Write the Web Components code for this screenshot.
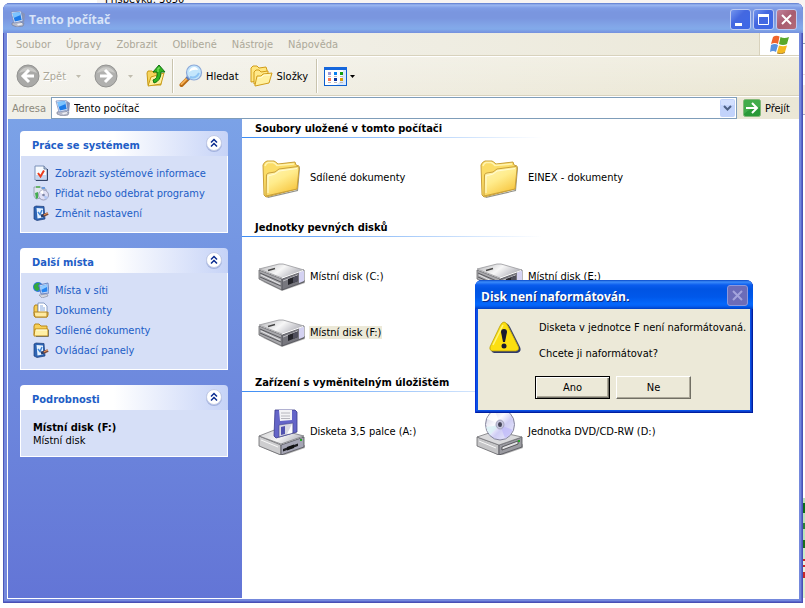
<!DOCTYPE html>
<html lang="cs">
<head>
<meta charset="utf-8">
<title>Tento počítač</title>
<style>
html, body { height: 100%; }
body {
  margin: 0;
  font: 11px/13px "DejaVu Sans Condensed", "DejaVu Sans", sans-serif;
  color: #000;
  background: #fff;
}
</style>
</head>
<body>
<xp-desktop>
  <span slot="behind">Příspěvků: 3650</span>
  <xp-window heading="Tento počítač">
    <xp-menubar>
      <button>Soubor</button><button>Úpravy</button><button>Zobrazit</button><button>Oblíbené</button><button>Nástroje</button><button>Nápověda</button>
    </xp-menubar>
    <xp-toolbar></xp-toolbar>
    <xp-address value="Tento počítač"></xp-address>
    <xp-explorer>
      <xp-taskbox slot="side" heading="Práce se systémem">
        <xp-link icon="info">Zobrazit systémové informace</xp-link>
        <xp-link icon="programs">Přidat nebo odebrat programy</xp-link>
        <xp-link icon="settings">Změnit nastavení</xp-link>
      </xp-taskbox>
      <xp-taskbox slot="side" heading="Další místa">
        <xp-link icon="network">Místa v síti</xp-link>
        <xp-link icon="documents">Dokumenty</xp-link>
        <xp-link icon="smallfolder">Sdílené dokumenty</xp-link>
        <xp-link icon="settings">Ovládací panely</xp-link>
      </xp-taskbox>
      <xp-taskbox slot="side" heading="Podrobnosti">
        <xp-details heading="Místní disk (F:)">Místní disk</xp-details>
      </xp-taskbox>
      <xp-group heading="Soubory uložené v tomto počítači">
        <xp-item icon="folder">Sdílené dokumenty</xp-item>
        <xp-item icon="folder">EINEX - dokumenty</xp-item>
      </xp-group>
      <xp-group heading="Jednotky pevných disků">
        <xp-item icon="disk">Místní disk (C:)</xp-item>
        <xp-item icon="disk">Místní disk (E:)</xp-item>
        <xp-item icon="disk" selected>Místní disk (F:)</xp-item>
      </xp-group>
      <xp-group heading="Zařízení s vyměnitelným úložištěm">
        <xp-item icon="floppy">Disketa 3,5 palce (A:)</xp-item>
        <xp-item icon="cd">Jednotka DVD/CD-RW (D:)</xp-item>
      </xp-group>
    </xp-explorer>
  </xp-window>
  <xp-dialog slot="over" heading="Disk není naformátován.">
    <p>Disketa v jednotce F není naformátovaná.</p>
    <p>Chcete ji naformátovat?</p>
  </xp-dialog>
</xp-desktop>

<script>
/* name: [width, height, markup] */
const ICONS = {
  computer: [16, 16, `
    <path d="M2 12 L9 10.500 L14 12.500 L13 15 L7 16 L2 14Z" fill="#b9bccb" stroke="#6d7590" stroke-width=".6"/>
    <path d="M7 13 L12 12 L12 13.500 L8 14.500Z" fill="#eef0f6"/>
    <path d="M12 1 L15 3 L14 12 L11 10Z" fill="#8793b8"/>
    <path d="M1 1 L11 0 L13 10 L4 12Z" fill="#dfe8f8" stroke="#7488b8" stroke-width=".7"/>
    <path d="M2.500 2 L10 1.200 L11.700 9 L4.800 10.500Z" fill="#1d7be8"/>
    <path d="M2.500 2 L10 1.200 L10.600 4 L3.500 7Z" fill="#7cc4ff"/>`],
  back: [24, 24, `
    <circle cx="12" cy="12" r="11" fill="#a9a9a7" stroke="#929290"/>
    <path d="M3 9 A10 10 0 0 1 21 9 Q12 5 3 9" fill="#c9c9c6"/>
    <path d="M13 6 L7 12 L13 18 M8 12 H18" fill="none" stroke="#fff" stroke-width="3"/>`],
  forward: [24, 24, `
    <circle cx="12" cy="12" r="11" fill="#b1b1af" stroke="#929290"/>
    <path d="M3 9 A10 10 0 0 1 21 9 Q12 5 3 9" fill="#cbcbc8"/>
    <path d="M11 6 L17 12 L11 18 M16 12 H6" fill="none" stroke="#fff" stroke-width="3"/>`],
  up: [20, 24, `
    <path d="M1 9 L2 7 L6 7 L8 9 L13 8 L15 21 L2 21Z" fill="#f6d45c" stroke="#c89a14"/>
    <path d="M5 13 L18 9 L15 20 L2 22Z" fill="#fff0a0" stroke="#c89a14"/>
    <path d="M7 16 Q12 15 11 8 L7 8 L13 1 L19 8 L15 8 Q15 17 8 19Z" fill="#2fb51f" stroke="#147012"/>
    <path d="M12 8 L12 4 L14 4" fill="none" stroke="#8cea70"/>`],
  search: [24, 24, `
    <path d="M2.500 21 L9 14.500" stroke="#b86a14" stroke-width="4" stroke-linecap="round"/>
    <path d="M2.500 20 L8 14.500" stroke="#f6b054" stroke-width="2" stroke-linecap="round"/>
    <path d="M8 15 L10 13" stroke="#5878b8" stroke-width="4"/>
    <circle cx="15" cy="8.500" r="7.500" fill="#c4e6fc" stroke="#8ca8d8" stroke-width="1.200"/>
    <path d="M10 8 Q11 3 16 3 Q19 4 19 6 Q14 5 10 8" fill="#fff"/>
    <path d="M11 13 Q17 15 20 9" fill="none" stroke="#8ec4f4" stroke-width="2"/>`],
  folders: [24, 22, `
    <path d="M1 17 L1 3 L3 1 L7 1 L9 3 L16 2 L17 5 L17 15Z" fill="#ffe680" stroke="#d19c18"/>
    <path d="M4 19 L4 7 L6 5 L9 5 L11 7 L18 6 L18 16Z" fill="#ffe98a" stroke="#d19c18"/>
    <path d="M5 20 L7 11 L11 11 L13 9 L22 8 L19 18 L5 21Z" fill="#fff0a0" stroke="#d19c18"/>
    <path d="M8 13 L12 12 L14 10 L20 10" fill="none" stroke="#fffbd6"/>`],
  views: [23, 19, `
    <rect x=".5" y=".5" width="22" height="18" fill="#fff" stroke="#0b5fd0"/>
    <path d="M19 3H22V18H12Q19 14 19 3" fill="#d8e8fc"/>
    <path d="M0 0H23V3H0Z" fill="#1567dc"/>
    <path d="M4 5h3v3h-3z" fill="#9c98d8"/><path d="M10 5h3v3h-3z" fill="#0a82f0"/><path d="M16 5h3v3h-3z" fill="#109c10"/>
    <path d="M4 11h3v3h-3z" fill="#fc7450"/><path d="M10 11h3v3h-3z" fill="#0a349c"/><path d="M16 11h3v3h-3z" fill="#d89c08"/>
    <path d="M4 9.500h3M10 9.500h3M16 9.500h3M4 15.500h3M10 15.500h3M16 15.500h3" stroke="#b8b8c0"/>`],
  caret: [5, 3, `<path d="M0 0H5L2.500 3Z" fill="currentColor"/>`],
  go: [18, 18, `
    <rect x=".5" y=".5" width="17" height="17" rx="2" fill="#2a9a38" stroke="#82b878"/>
    <path d="M1 1H17V8Q8 8 1 15Z" fill="#4cb454" opacity=".7"/>
    <path d="M3 9H14M9 4L14 9L9 14" fill="none" stroke="#fff" stroke-width="2"/>`],
  down: [15, 18, `
    <rect width="15" height="18" rx="2" fill="#c2d3fb"/>
    <path d="M1 1H14V6H1Z" fill="#d3e0fe"/>
    <path d="M4 7L7.500 10.500L11 7" fill="none" stroke="#4d6185" stroke-width="2"/>`],
  flag: [20, 19, `
    <path d="M3 2 Q6 0 9.500 1.500 L8 9 Q5 7 1 9Z" fill="#f0642c"/>
    <path d="M10.500 2 Q14 4 19 2 L17 9 Q13 11 9 9Z" fill="#58a82c"/>
    <path d="M1 10 Q5 8 8 10 L6 17 Q3 15 0 17Z" fill="#5a92e0"/>
    <path d="M9 10.500 Q13 12 17 10.500 L15 17 Q11 20 7 17.500Z" fill="#f4b820"/>
    <path d="M7 18 Q11 20 15 17.500" fill="none" stroke="#a88030"/>`],
  chevrons: [18, 18, `
    <circle cx="9" cy="10" r="8" fill="#7d8fc8" opacity=".55"/>
    <circle cx="9" cy="9" r="7.500" fill="#fff" stroke="#c2cbe6"/>
    <path d="M6 8.500L9 5.500L12 8.500M6 12.500L9 9.500L12 12.500" fill="none" stroke="#0a2c90" stroke-width="1.500"/>`],
  info: [16, 16, `
    <path d="M2 1H11L14 4V15H2Z" fill="#f6faff" stroke="#7a90b8"/>
    <path d="M11 1V4H14" fill="#b8c8e4" stroke="#56698c" stroke-width=".8"/>
    <path d="M14.500 4V15.500H3" fill="none" stroke="#33456a"/>
    <path d="M3 10H13V14H3Z" fill="#c4d6f2"/>
    <path d="M5 8L7.500 11.500L11 5.500" fill="none" stroke="#ea3c1c" stroke-width="2"/>`],
  programs: [16, 16, `
    <path d="M1 2H8L9 4H13V12L3 14L1 11Z" fill="#dfe5ee" stroke="#8c98ac" stroke-width=".8"/>
    <path d="M3 1H7V3H3Z" fill="#6ab46c"/><path d="M9 2H12V4H9Z" fill="#6c9de0"/>
    <path d="M2 8L5 7V13L3 14Z" fill="#43ac50"/>
    <circle cx="10.500" cy="10" r="5" fill="#dfdff4" stroke="#8b8ea8" stroke-width=".8"/>
    <path d="M10.500 10L7 7A5 5 0 0 1 10 5Z" fill="#fff"/><path d="M10.500 10L15 12A5 5 0 0 1 12 14.500Z" fill="#b4c8f4"/>
    <circle cx="10.500" cy="10" r="1.300" fill="#7d84a4"/>`],
  settings: [16, 16, `
    <path d="M1 2L3 1L11 1.500L12 14L4 15.500L1 14Z" fill="#2d64b4" stroke="#1c3c78" stroke-width=".7"/>
    <path d="M3.500 3L10 3.500V12.500L4.500 13.500Z" fill="#e6f2ff"/>
    <path d="M5 7L7 9.500L9 5" fill="none" stroke="#3f86d8" stroke-width="1.500"/>
    <path d="M8 11L10.500 10.500" fill="none" stroke="#263c6c" stroke-width="3"/>
    <path d="M10.500 10.500L15 8.500" stroke="#7a4a38" stroke-width="3"/>
    <path d="M11 9.800L15 8" stroke="#f09c60"/>`],
  network: [16, 16, `
    <circle cx="5" cy="5" r="5" fill="#2f78d8"/>
    <path d="M1 3Q4 0 7 1L5 4L7 7L4 9Q0 7 1 3" fill="#34a83c"/>
    <path d="M6 13L14 12L15 14L9 16Z" fill="#d4d6de" stroke="#8288a0" stroke-width=".6"/>
    <path d="M6 3L15 1L16 11L8 12Z" fill="#c6d8f8" stroke="#5874b4" stroke-width=".8"/>
    <path d="M7.500 4.300L14 2.600L14.500 9.600L9 10.600Z" fill="#2584f0"/>
    <path d="M7.500 4.300L14 2.600L14 5L8 8Z" fill="#90caff"/>`],
  documents: [16, 16, `
    <path d="M1 14V5L2 3H5V12L15 10V13L14 15H2Z" fill="#f7cd54" stroke="#b4841c"/>
    <path d="M5 1H11L14 4V12H5Z" fill="#fff" stroke="#7088b8" stroke-width=".8"/>
    <path d="M7 4H10M7 6H12M7 8H12" stroke="#86a8de"/>
    <path d="M1 10H14V15H2Z" fill="#ffeaa0" stroke="#b4841c"/>`],
  smallfolder: [16, 16, `
    <path d="M1 13V4L2 2H6L8 4H14V13Z" fill="#f8d058" stroke="#ba8818"/>
    <path d="M1 14L2 7H15V14Z" fill="#fff0a4" stroke="#ba8818"/>
    <path d="M3 14.500H15.500V8" fill="none" stroke="#6c6850" stroke-width=".8"/>
    <path d="M3 8H14" stroke="#fffce0"/>`],
  folder: [48, 48, `
    <defs><linearGradient id="f" x1="0" y1="0" x2=".6" y2="1"><stop offset="0" stop-color="#fff6b8"/><stop offset=".5" stop-color="#ffec8c"/><stop offset="1" stop-color="#f7c640"/></linearGradient></defs>
    <path d="M10 45L40 38L42 15L41 13L39 37L9 44Z" fill="#4c4c40" opacity=".6"/>
    <path d="M5 12Q6 9 9 8L16 8Q18 9 20 11L37 9L38 12L41 13L39 36L8 44L6 42Z" fill="#fbdc66" stroke="#c9a03a"/>
    <path d="M7 13Q8 10 10 9.500L15 9.500Q17 10 19 12.500L36 11" fill="none" stroke="#fff4b0" stroke-width="1.500"/>
    <path d="M8 43L8.500 22Q9 20 11 20L17 19L21 16L40 13.500Q41 14 41 16L39 36Z" fill="url(#f)" stroke="#c9a03a"/>
    <path d="M10 40L10 23L17 21L21 18L39 15.500" fill="none" stroke="#fffbd4"/>`],
  disk: [48, 48, `
    <defs><linearGradient id="d" x1="0" y1="0" x2="1" y2=".4"><stop offset="0" stop-color="#b4b4b8"/><stop offset=".55" stop-color="#f7f7f7"/><stop offset="1" stop-color="#b4b4bc"/></linearGradient></defs>
    <path d="M3 29L24 39L47 31V28L24 35Z" fill="#777" opacity=".55"/>
    <path d="M1 18L24 27V38L1 27Z" fill="#a8a8ac" stroke="#67676b" stroke-width=".8"/>
    <path d="M2 21L23 30M2 25L23 34" stroke="#59595d"/>
    <path d="M3 23L22 32" stroke="#e8e8ea"/>
    <path d="M24 27L46 18V30L24 38Z" fill="#77777e" stroke="#4e4e55" stroke-width=".8"/>
    <path d="M41 20L46 18V29L41 31Z" fill="#d4d2f2"/>
    <path d="M25 29L40 23" stroke="#c4c4c8"/>
    <path d="M30 27L40 23.500V29L30 33Z" fill="#25252b"/>
    <path d="M35 25.500L40 23.500V29L35 31Z" fill="#4f4f5c"/>
    <path d="M1 17L21 12H25L46 18L24 26Z" fill="url(#d)" stroke="#98989c" stroke-width=".8"/>
    <path d="M10 18.500L17 16.500" stroke="#444" stroke-width="1.500"/>
    <path d="M24 26L45 18.500" stroke="#fff"/>`],
  floppy: [48, 48, `
    <defs><linearGradient id="d" x1="0" y1="0" x2="1" y2=".4"><stop offset="0" stop-color="#d0d0d2"/><stop offset=".6" stop-color="#f4f4f4"/><stop offset="1" stop-color="#bcbcc4"/></linearGradient></defs>
    <path d="M3 40L24 49L47 41V38L24 45Z" fill="#777" opacity=".55"/>
    <path d="M1 29L23 38V48L1 39Z" fill="#cdcdcf" stroke="#67676b" stroke-width=".8"/>
    <path d="M3 33L20 40" stroke="#f8f8f8"/>
    <path d="M23 38L46 30V40L23 48Z" fill="#a5a5b4" stroke="#4e4e55" stroke-width=".8"/>
    <path d="M1 29L19 22L46 29L23 37Z" fill="url(#d)" stroke="#77777b" stroke-width=".8"/>
    <path d="M25 42L40 36.500V39L25 44.500Z" fill="#1b1b1f"/>
    <path d="M29 40L36 37.500V41L29 43.500Z" fill="#111"/>
    <path d="M43 32V34" stroke="#24a824" stroke-width="2"/>
    <path d="M17 3H37L39 5V25L18 31L16 29Z" fill="#6465c8" stroke="#3a3a8c" stroke-width=".8"/>
    <path d="M21 3H34V13L22 14Z" fill="#f3f3f6"/>
    <path d="M23 6H32M23 9H32M23 11.500H32" stroke="#a6a6b0" stroke-width=".8"/>
    <path d="M21 18L35 16V26L21 30Z" fill="#dadae4" stroke="#44448c" stroke-width=".6"/>
    <path d="M23 20L27 19V27L23 28Z" fill="#5051b0"/>
    <path d="M29 27L34 17V26Z" fill="#fff"/>`],
  cd: [48, 48, `
    <defs><linearGradient id="c" x1="0" y1="0" x2="1" y2="1"><stop offset="0" stop-color="#c8c8dc"/><stop offset=".4" stop-color="#fafaff"/><stop offset=".6" stop-color="#cfcdf4"/><stop offset="1" stop-color="#f0f0ff"/></linearGradient></defs>
    <path d="M3 39L24 49L47 41V37L24 45Z" fill="#777" opacity=".55"/>
    <path d="M1 30L23 38V48L1 39Z" fill="#c5c5c7" stroke="#67676b" stroke-width=".8"/>
    <path d="M3 34L20 41" stroke="#f8f8f8"/>
    <path d="M23 38L46 30V40L23 48Z" fill="#9a9aa0" stroke="#4e4e55" stroke-width=".8"/>
    <path d="M1 30L19 24L46 30L23 38Z" fill="#dadadc" stroke="#77777b" stroke-width=".8"/>
    <path d="M26 40L42 34V37L26 43Z" fill="#e4e4e6" stroke="#303034" stroke-width=".7"/>
    <path d="M43 33V35" stroke="#24a824" stroke-width="2"/>
    <ellipse cx="24" cy="17.500" rx="14.500" ry="15.500" fill="url(#c)" stroke="#85859c"/>
    <path d="M24 17L11 12Q14 5 19 4Z" fill="#fff" opacity=".8"/>
    <path d="M24 18L37 23Q33 30 29 31Z" fill="#bdb8fa" opacity=".7"/>
    <path d="M24 18L14 28Q11 24 10 20Z" fill="#d8f0f4" opacity=".8"/>
    <ellipse cx="24" cy="17.500" rx="4" ry="4.500" fill="#c6c6de" stroke="#9090a8" stroke-width=".7"/>
    <ellipse cx="24" cy="17.500" rx="2" ry="2.500" fill="#444458"/>`],
  warning: [32, 32, `
    <path d="M16 2Q19 2 21 6L31 26Q33 31 28 32H5Q1 31 3 27L13 6Q14 3 16 2" fill="#2f3a6c"/>
    <path d="M15 1Q17 1 19 5L29 25Q31 29 27 30H3Q0 29 1 26L11 5Q13 1 15 1" fill="#fcdf10" stroke="#b8a010" stroke-width=".8"/>
    <path d="M14 4L4 24" stroke="#fff57c" stroke-width="1.500"/>
    <path d="M12 11Q12 8 15 8Q18 8 18 11L16 21H14Z" fill="#1a1a30"/>
    <circle cx="15" cy="25" r="2.500" fill="#1a1a30"/>`],
  min: [19, 19, `<path d="M4 13H11V16H4Z" fill="#fff"/>`],
  max: [19, 19, `<path d="M4.500 5.500H14.500V14.500H4.500Z" fill="none" stroke="#fff"/><path d="M4 4H15V7H4Z" fill="#fff"/>`],
  close: [19, 19, `<path d="M5 5L14 14M14 5L5 14" stroke="currentColor" stroke-width="2"/>`],
};

function define(name, render) {
  customElements.define(name, class extends HTMLElement {
    constructor() { super(); this.attachShadow({ mode: 'open' }); }
    connectedCallback() {
      const t = document.createElement('template');
      t.innerHTML = render(this);
      this.shadowRoot.replaceChildren(t.content.cloneNode(true));
    }
  });
}
const attr = (el, n) => el.getAttribute(n) || '';
const BUTTON = `button { font: inherit; color: inherit; background: none; border: 0; padding: 0; margin: 0; }`;

define('xp-icon', el => {
  const [w, h, body] = ICONS[attr(el, 'name')];
  return `<style>:host { display: block; flex: none; } svg { display: block; }</style>
    <svg width="${w}" height="${h}" viewBox="0 0 ${w} ${h}" aria-hidden="true">${body}</svg>`;
});

define('xp-desktop', () => `
  <style>
    :host {
      display: flex; flex-direction: column; position: relative; box-sizing: border-box;
      min-height: 100%; padding: 3px 2px 5px 3px; overflow: hidden;
      background:
        linear-gradient(#f8f4f2 43px, #8e9cb0 43px 44px, #fff 44px 74px, #ecdcdc 74px 75px, #fff 75px 85px,
          #f5ebe5 85px 114px, #a8a8c0 114px 115px, #fff 115px 498px, #b8e4b8 498px 503px, #0c6c1c 503px 513px,
          #b8e4b8 513px 523px, #2c8038 523px 529px, #b8e4b8 529px 540px, #18701c 540px 548px, #c8ecc8 548px 559px,
          #c82828 559px 561px, #e8f0dc 561px 565px, #c82828 565px 567px, #e8f0dc 567px 572px, #c82828 572px 578px,
          #d8f0d0 578px 598px, #fff 598px) right / 2px 100% no-repeat,
        linear-gradient(#f8f4f2, #f8f4f2) 97px 0 / 100% 5px no-repeat, #fff;
    }
    .behind { position: absolute; left: 105px; top: -7px; z-index: 0; }
    ::slotted(xp-window) { z-index: 1; }
  </style>
  <div class="behind"><slot name="behind"></slot></div><slot></slot><slot name="over"></slot>`);

define('xp-window', el => `
  <style>
    ${BUTTON}
    :host { display: flex; flex: 1; flex-direction: column; position: relative; border-radius: 7px 7px 0 0; overflow: hidden;
      background: #7488dc; box-shadow: inset 1px 0 #4c58b8, inset -1px -1px #4a50b4, inset -2px -2px #5a68cc; }
    header { display: flex; align-items: center; gap: 2px; height: 30px; padding: 0 6px 0 7px; box-sizing: border-box;
      background: linear-gradient(#5a78cc, #9cb8f2 2px, #7f9de6 5px, #7a96df 9px, #7a96df 15px, #82a6e8 23px, #82aaea 26px, #7590de); }
    h1 { flex: 1; margin: 0 0 0 1px; font: bold 12px/16px "Open Sans", sans-serif; color: #d8e4f8; padding-top: 4px; }
    header xp-icon { padding-top: 2px; }
    button { width: 21px; height: 21px; margin-top: 3px; border: 1px solid #bccaf2; border-radius: 3px; color: #fff;
      background: linear-gradient(135deg, #7496ee, #4468e0 40%, #3c68e8); }
    button.close { background: linear-gradient(135deg, #c08098, #a85c70 50%, #b46c78); }
    button xp-icon { padding: 0; }
    .client { display: flex; flex: 1; flex-direction: column; margin: 0 4px 4px; border: solid #fff; border-width: 0 0 1px 1px; background: #fff; }
  </style>
  <header><xp-icon name="computer"></xp-icon><h1>${attr(el, 'heading')}</h1>
    <button aria-label="Minimalizovat"><xp-icon name="min"></xp-icon></button>
    <button aria-label="Maximalizovat"><xp-icon name="max"></xp-icon></button>
    <button class="close" aria-label="Zavřít"><xp-icon name="close"></xp-icon></button>
  </header>
  <div class="client"><slot></slot></div>`);

define('xp-menubar', () => `
  <style>
    :host { display: flex; height: 22px; border-bottom: 1px solid #d8d2bd; box-shadow: 0 1px #fff; margin-bottom: 1px;
      background: linear-gradient(90deg, #f4f3ee, #ebe8d8); }
    nav { display: flex; flex: 1; gap: 15px; padding-left: 8px; }
    ::slotted(button) { font: inherit; color: #aca899; background: none; border: 0; padding: 0; }
    .logo { display: flex; justify-content: center; align-items: center; width: 39px; background: #fff; border-left: 1px solid #d8d2bd; }
  </style>
  <nav><slot></slot></nav><div class="logo"><xp-icon name="flag"></xp-icon></div>`);

define('xp-toolbar', () => `
  <style>
    ${BUTTON}
    :host { display: flex; align-items: center; height: 38px; padding-left: 8px; border-bottom: 1px solid #d8d2bd; box-shadow: 0 1px #fff; margin-bottom: 1px;
      background: linear-gradient(rgba(255,255,255,.25), transparent), linear-gradient(90deg, #f3f2ec, #ebe7d4); }
    button { display: flex; align-items: center; gap: 3px; }
    .off { color: #aca899; text-shadow: 1px 1px #fff; }
    .split { padding: 0 13px 0 10px; color: #c0bcae; }
    .rule { width: 1px; height: 34px; background: #c9c4ae; box-shadow: 1px 0 #fff; }
    .pad { padding-left: 6px; }
    .folders { padding: 0 8px 0 11px; }
    .views { gap: 3px; padding-left: 7px; }
  </style>
  <button class="off"><xp-icon name="back"></xp-icon>Zpět</button>
  <button class="split" aria-label="Historie zpět"><xp-icon name="caret"></xp-icon></button>
  <button class="off" aria-label="Vpřed"><xp-icon name="forward"></xp-icon></button>
  <button class="split" aria-label="Historie vpřed"><xp-icon name="caret"></xp-icon></button>
  <button aria-label="Nahoru"><xp-icon name="up"></xp-icon></button>
  <span class="pad"></span><span class="rule"></span>
  <button class="pad"><xp-icon name="search"></xp-icon>Hledat</button>
  <button class="folders"><xp-icon name="folders"></xp-icon>Složky</button>
  <span class="rule"></span>
  <button class="views" aria-label="Zobrazení"><xp-icon name="views"></xp-icon><xp-icon name="caret"></xp-icon></button>`);

define('xp-address', el => `
  <style>
    ${BUTTON}
    :host { display: flex; align-items: center; height: 22px; padding-left: 4px; background: linear-gradient(90deg, #f1f0e8, #ebe7d6); }
    label { color: #8c897c; width: 39px; }
    .box { display: flex; flex: 1; align-items: center; gap: 3px; height: 20px; padding: 0 1px 0 3px; border: 1px solid #7f9db9; background: #fff; }
    input { flex: 1; min-width: 0; font: inherit; border: 0; padding: 0; background: none; color: #000; outline: 0; }
    .go { display: flex; align-items: center; gap: 4px; padding: 0 9px 0 6px; }
  </style>
  <label for="a">Adresa</label>
  <div class="box"><xp-icon name="computer"></xp-icon><input id="a" value="${attr(el, 'value')}">
    <button aria-label="Rozbalit"><xp-icon name="down"></xp-icon></button></div>
  <button class="go"><xp-icon name="go"></xp-icon>Přejít</button>`);

define('xp-explorer', () => `
  <style>
    :host { display: flex; flex: 1; }
    aside { display: flex; flex-direction: column; gap: 15px; box-sizing: border-box; width: 234px; flex: none; padding: 12px 14px 12px 12px;
      background: linear-gradient(#7ba2e7, #6375d6); }
    main { flex: 1; min-width: 0; background: #fff; }
  </style>
  <aside><slot name="side"></slot></aside><main><slot></slot></main>`);

define('xp-taskbox', el => `
  <style>
    ${BUTTON}
    :host { display: block; }
    header { display: flex; align-items: center; height: 25px; padding: 0 5px 0 12px; border-radius: 4px 4px 0 0;
      background: linear-gradient(90deg, #fff 45%, #c6d3f7); }
    h2 { flex: 1; margin: 0; padding-top: 3px; font: bold 11px/13px "DejaVu Sans Condensed", sans-serif; color: #215dc6; }
    button { padding-bottom: 2px; }
    .body { padding: 7px 12px 9px; border: solid #fff; border-width: 0 1px 1px; background: #d6dff7; }
  </style>
  <header><h2>${attr(el, 'heading')}</h2><button aria-label="Sbalit"><xp-icon name="chevrons"></xp-icon></button></header>
  <div class="body"><slot></slot></div>`);

define('xp-link', el => `
  <style>
    :host { display: block; }
    a { display: flex; align-items: center; gap: 6px; height: 20px; color: #215dc6; text-decoration: none; white-space: nowrap; }
  </style>
  <a href="#"><xp-icon name="${attr(el, 'icon')}"></xp-icon><span><slot></slot></span></a>`);

define('xp-details', el => `
  <style>:host { display: block; padding-top: 4px; } b { display: block; }</style>
  <b>${attr(el, 'heading')}</b><slot></slot>`);

define('xp-group', el => `
  <style>
    :host { display: block; }
    h2 { margin: 0; padding: 2px 13px 0; font: bold 11px/16px "DejaVu Sans Condensed", sans-serif; }
    .rule { height: 1px; max-width: 300px; background: linear-gradient(90deg, #3c8cf4, #fff); }
    .items { display: grid; grid-template-columns: repeat(auto-fill, 218px); grid-auto-rows: 56px; padding: 11px 0 13px 16px; }
  </style>
  <h2>${attr(el, 'heading')}</h2><div class="rule"></div><div class="items"><slot></slot></div>`);

define('xp-item', el => `
  <style>
    :host { display: flex; align-items: center; gap: 3px; white-space: nowrap; }
    span { padding: 0 1px; }
    :host([selected]) span { background: #ece9d8; }
  </style>
  <xp-icon name="${attr(el, 'icon')}"></xp-icon><span><slot></slot></span>`);

define('xp-dialog', el => `
  <style>
    ${BUTTON}
    :host { position: absolute; left: 475px; top: 280px; z-index: 2; box-sizing: border-box; width: 278px; padding: 0 3px 3px;
      border-radius: 7px 7px 0 0; overflow: hidden; background: #0a50e4; box-shadow: inset 1px 0 #0831d9, inset -1px -1px #001ea0, inset -2px -2px #0a3cc8; }
    header { display: flex; align-items: center; height: 29px; margin: 0 -3px; padding: 0 5px 0 6px; box-sizing: border-box;
      background: linear-gradient(#0848c8, #3c8cfa 2px, #0a5cee 5px, #0054e3 9px, #0058ea 17px, #0468fc 24px, #0460f4 26px, #0040c4); }
    h2 { flex: 1; margin: 0; padding-top: 4px; font: bold 12px/16px "Open Sans", sans-serif; color: #fff; text-shadow: 1px 1px #0a2c84; }
    .close { width: 21px; height: 21px; margin-top: 2px; border: 1px solid #8c98dc; border-radius: 3px; background: #6c6cb8; color: #a4a4dc; }
    section { padding: 12px 0 11px 11px; background: #ece9d8; }
    .message { display: flex; gap: 18px; }
    .text { display: grid; gap: 13px; white-space: nowrap; }
    ::slotted(p) { margin: 0; }
    .buttons { display: flex; justify-content: center; gap: 6px; padding: 16px 2px 0 0; margin-left: -11px; }
    .buttons button { box-sizing: border-box; width: 75px; height: 23px; background: #ece9d8;
      border: 1px solid; border-color: #fff #716f64 #716f64 #fff; box-shadow: inset -1px -1px #aca899; }
    .buttons .default { border-color: #000; box-shadow: inset 1px 1px #fff, inset -1px -1px #716f64, inset -2px -2px #aca899; }
  </style>
  <header><h2>${attr(el, 'heading')}</h2><button class="close" aria-label="Zavřít"><xp-icon name="close"></xp-icon></button></header>
  <section>
    <div class="message"><xp-icon name="warning"></xp-icon><div class="text"><slot></slot></div></div>
    <div class="buttons"><button class="default">Ano</button><button>Ne</button></div>
  </section>`);
</script>
</body>
</html>
